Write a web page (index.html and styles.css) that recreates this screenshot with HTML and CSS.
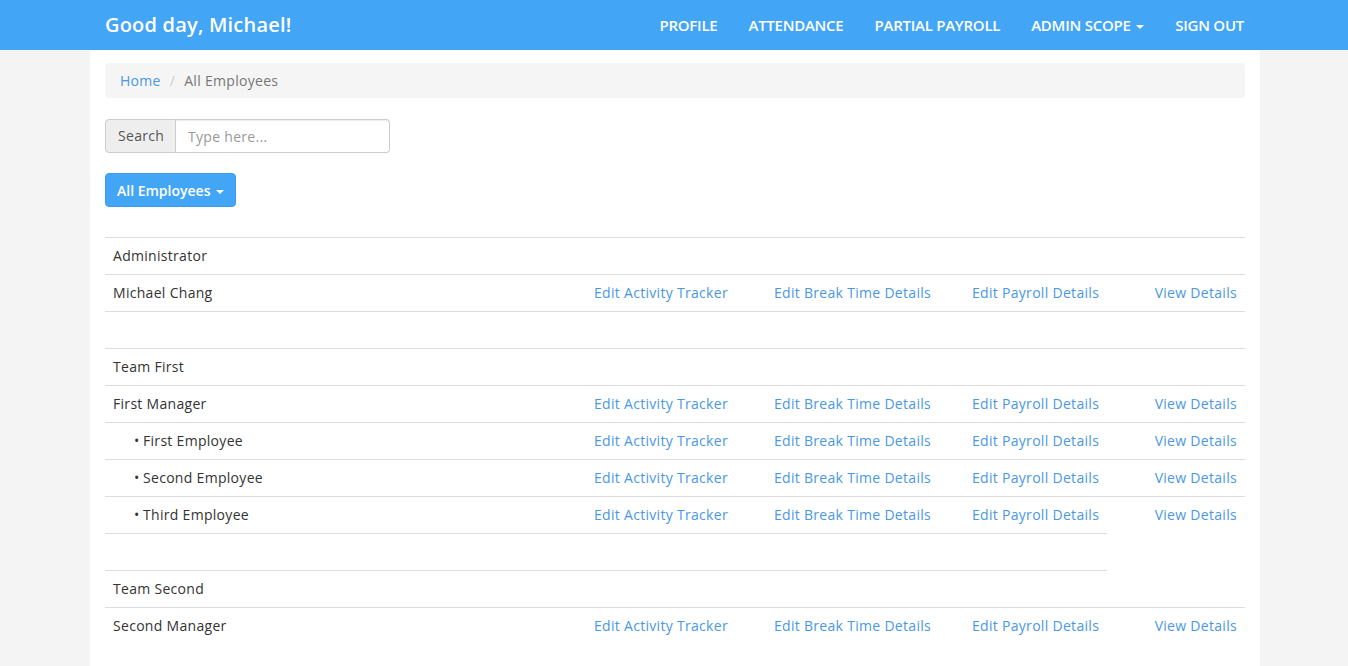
FILE: index.html
```html
<!DOCTYPE html>
<html>
<head>
<meta charset="utf-8">
<link rel="stylesheet" href="styles.css">
</head>
<body>
<nav class="navbar">
  <div class="nav-inner">
    <a class="brand" href="#">Good day, Michael!</a>
    <ul class="nav-links">
      <li><a href="#">PROFILE</a></li>
      <li><a href="#">ATTENDANCE</a></li>
      <li><a href="#">PARTIAL PAYROLL</a></li>
      <li><a href="#">ADMIN SCOPE <span class="caret"></span></a></li>
      <li><a href="#">SIGN OUT</a></li>
    </ul>
  </div>
</nav>
<main class="container">
  <ol class="breadcrumb">
    <li><a href="#">Home</a></li>
    <li class="sep">/</li>
    <li class="active">All Employees</li>
  </ol>
  <div class="input-group">
    <span class="addon">Search</span>
    <input class="form-control" type="text" placeholder="Type here...">
  </div>
  <button class="btn-primary">All Employees <span class="caret"></span></button>
  <table class="emp-table">
    <colgroup>
      <col class="c1"><col class="c2"><col class="c3"><col class="c4"><col class="c5">
    </colgroup>
    <tbody>
      <tr><td colspan="5">Administrator</td></tr>
      <tr><td>Michael Chang</td><td><a href="#">Edit Activity Tracker</a></td><td><a href="#">Edit Break Time Details</a></td><td><a href="#">Edit Payroll Details</a></td><td class="r"><a href="#">View Details</a></td></tr>
      <tr class="spacer"><td colspan="5"></td></tr>
      <tr><td colspan="5">Team First</td></tr>
      <tr><td>First Manager</td><td><a href="#">Edit Activity Tracker</a></td><td><a href="#">Edit Break Time Details</a></td><td><a href="#">Edit Payroll Details</a></td><td class="r"><a href="#">View Details</a></td></tr>
      <tr><td class="sub"><span class="bullet">•</span>First Employee</td><td><a href="#">Edit Activity Tracker</a></td><td><a href="#">Edit Break Time Details</a></td><td><a href="#">Edit Payroll Details</a></td><td class="r"><a href="#">View Details</a></td></tr>
      <tr><td class="sub"><span class="bullet">•</span>Second Employee</td><td><a href="#">Edit Activity Tracker</a></td><td><a href="#">Edit Break Time Details</a></td><td><a href="#">Edit Payroll Details</a></td><td class="r"><a href="#">View Details</a></td></tr>
      <tr><td class="sub"><span class="bullet">•</span>Third Employee</td><td><a href="#">Edit Activity Tracker</a></td><td><a href="#">Edit Break Time Details</a></td><td><a href="#">Edit Payroll Details</a></td><td class="r"><a href="#">View Details</a></td></tr>
      <tr class="spacer partial"><td colspan="4"></td><td class="nob"></td></tr>
      <tr class="partial"><td colspan="4">Team Second</td><td class="nob"></td></tr>
      <tr><td>Second Manager</td><td><a href="#">Edit Activity Tracker</a></td><td><a href="#">Edit Break Time Details</a></td><td><a href="#">Edit Payroll Details</a></td><td class="r"><a href="#">View Details</a></td></tr>
    </tbody>
  </table>
</main>
</body>
</html>
```

FILE: styles.css
```css
* { box-sizing: border-box; }
html, body {
  margin: 0;
  padding: 0;
}
body {
  background: #f4f4f4;
  font-family: "Open Sans", "Liberation Sans", sans-serif;
  font-size: 14px;
  line-height: 20px;
  color: #333;
  letter-spacing: 0.3px;
  padding-left: 2px;
}
a { color: #4a98e4; text-decoration: none; }

.navbar {
  background: #42a5f5;
  height: 50px;
  margin-left: -2px;
  padding-left: 2px;
}
.nav-inner {
  width: 1170px;
  margin: 0 auto;
  padding: 0 15px;
  display: flex;
  justify-content: space-between;
  align-items: center;
  height: 50px;
}
.brand {
  color: #fff;
  font-size: 20px;
  font-weight: 600;
  line-height: 50px;
  letter-spacing: 0.2px;
}
.nav-links {
  list-style: none;
  margin: 0 -14px 0 0;
  padding: 0;
  display: flex;
}
.nav-links a {
  display: block;
  padding: 0 15px 0 16px;
  line-height: 50px;
  color: #fff;
  font-size: 15px;
  font-weight: 600;
  letter-spacing: -0.25px;
}
.caret {
  display: inline-block;
  width: 0;
  height: 0;
  margin-left: 2px;
  vertical-align: middle;
  border-top: 4px solid currentColor;
  border-left: 4px solid transparent;
  border-right: 4px solid transparent;
}

.container {
  width: 1170px;
  margin: 0 auto;
  background: #fff;
  padding: 13px 15px 20px;
  min-height: 616px;
}
.breadcrumb {
  list-style: none;
  margin: 0 0 21px;
  padding: 8px 15px;
  background: #f5f5f5;
  border-radius: 4px;
  display: flex;
  height: 35px;
  align-items: center;
}
.breadcrumb .sep {
  color: #ccc;
  padding: 0 9px;
}
.breadcrumb .active { color: #777; }

.input-group {
  display: flex;
  width: 285px;
  height: 34px;
  margin-bottom: 20px;
}
.addon {
  display: flex;
  align-items: center;
  padding: 6px 12px;
  background: #eee;
  border: 1px solid #ccc;
  border-radius: 4px 0 0 4px;
  color: #555;
  font-size: 14px;
  width: 71px;
}
.form-control {
  flex: 1;
  min-width: 0;
  border: 1px solid #ccc;
  border-left: 0;
  border-radius: 0 4px 4px 0;
  padding: 6px 12px;
  font-family: inherit;
  font-size: 14px;
  letter-spacing: 0.3px;
  color: #555;
  box-shadow: inset 0 1px 1px rgba(0,0,0,.075);
}
.form-control::placeholder { color: #999; }

.btn-primary {
  display: block;
  height: 34px;
  padding: 6px 11px;
  background: #42a5f5;
  border: 1px solid #3d9de9;
  border-radius: 4px;
  color: #fff;
  font-family: inherit;
  font-size: 14px;
  font-weight: 600;
  letter-spacing: 0;
  margin-bottom: 30px;
  white-space: nowrap;
}

.emp-table {
  width: 1140px;
  border-collapse: collapse;
  table-layout: fixed;
}
.emp-table col.c1 { width: 481px; }
.emp-table col.c2 { width: 180px; }
.emp-table col.c3 { width: 198px; }
.emp-table col.c4 { width: 143px; }
.emp-table col.c5 { width: 138px; }
.emp-table td {
  border-top: 1px solid #ddd;
  padding: 8px;
  height: 37px;
  line-height: 20px;
  white-space: nowrap;
  vertical-align: top;
}
.emp-table td.r { text-align: right; }
.emp-table td.sub { padding-left: 29px; }
.bullet {
  display: inline-block;
  width: 9px;
  letter-spacing: 0;
}
.emp-table td.nob { border-top: 0; }
.emp-table tr.spacer td { height: 37px; }
```
